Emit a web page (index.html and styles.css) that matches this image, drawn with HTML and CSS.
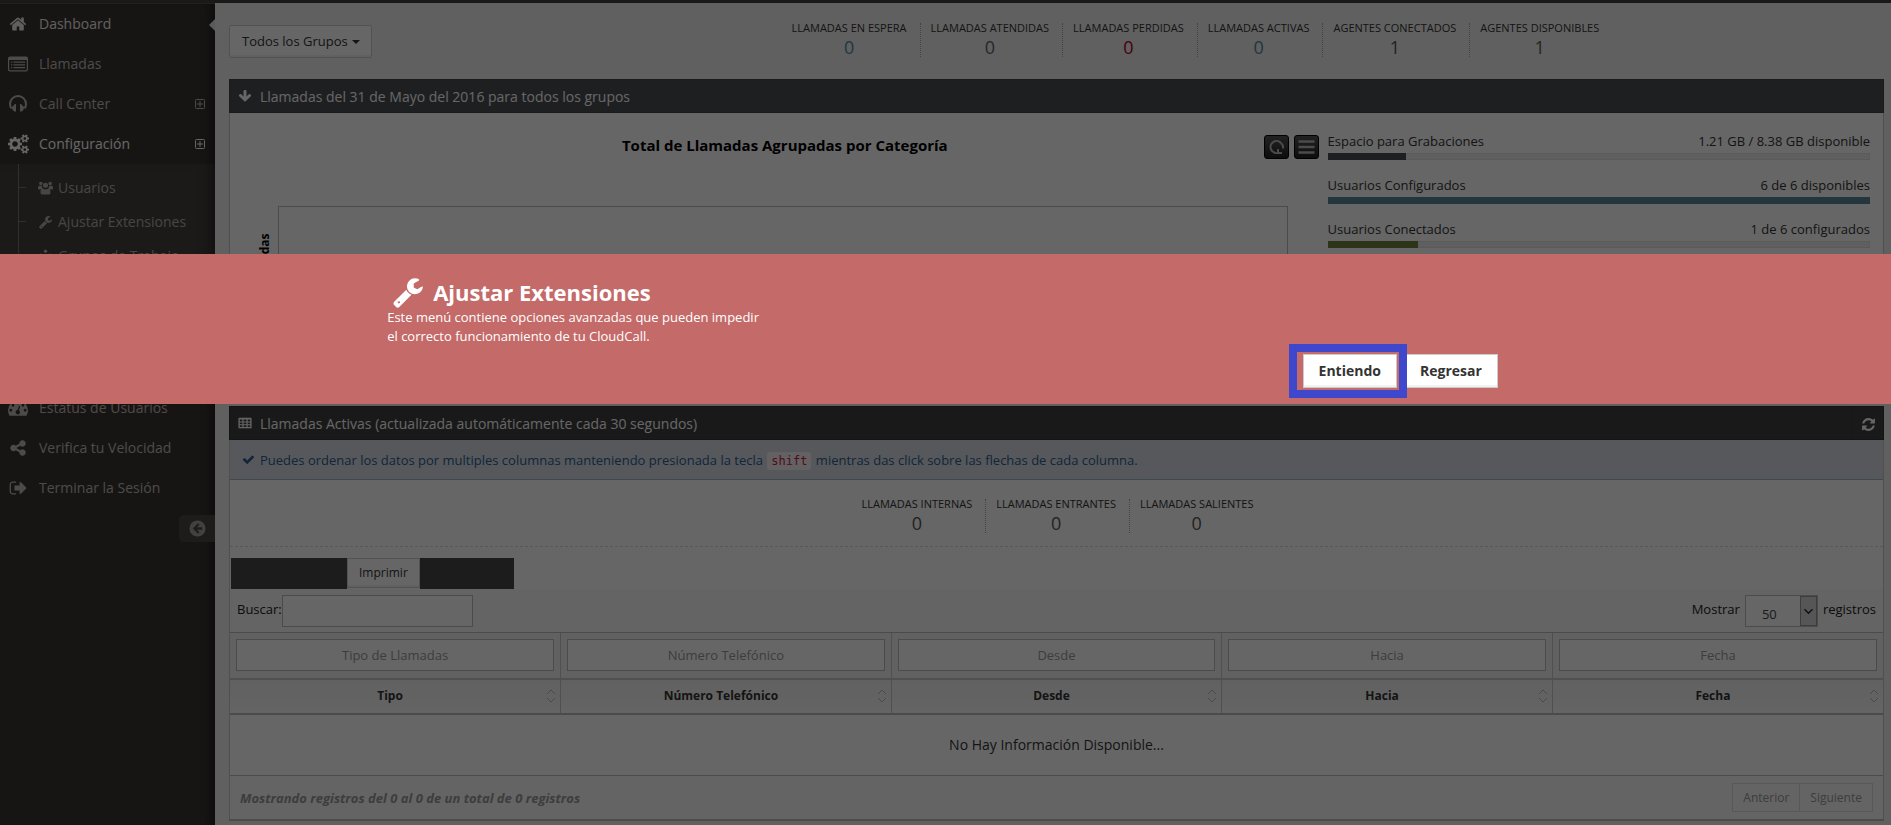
FILE: index.html
```html
<!DOCTYPE html>
<html lang="es">
<head>
<meta charset="utf-8">
<title>CloudCall - Dashboard</title>
<meta name="viewport" content="width=device-width, initial-scale=1">
<link rel="stylesheet" href="styles.css">
</head>
<body>
<svg class="sprite" aria-hidden="true">
  <symbol id="i-wrench" viewBox="0 0 1792 1792"><path d="M448 1472q0-26-19-45t-45-19-45 19-19 45 19 45 45 19 45-19 19-45zm644-420l-682 682q-37 37-90 37-52 0-91-37l-106-108q-38-36-38-90 0-53 38-91l681-681q39 98 114.5 173.5t173.5 114.5zm634-435q0 39-23 106-47 134-164.5 217.5t-258.5 83.5q-185 0-316.5-131.5t-131.5-316.5 131.5-316.5 316.5-131.5q58 0 121.5 16.5t107.5 46.5q16 11 16 28t-16 28l-293 169v224l193 107q5-3 79-48.5t135.5-81 70.5-35.5q15 0 23.5 10t8.5 25z"/></symbol>
  <symbol id="i-plus" viewBox="0 0 10 10"><rect x=".5" y=".5" width="9" height="9" rx="1" fill="none" stroke="currentColor"/><path d="M2 4.500h6v1H2zM4.500 2h1v6h-1z"/></symbol>
  <symbol id="i-sort" viewBox="0 0 10 14"><path d="M1 5l4-4 4 4M1 9l4 4 4-4" fill="none" stroke="currentColor"/></symbol>
</svg>

<div class="topbar"></div>
<div class="page">
  <aside class="sidebar">
    <nav>
      <ul class="nav">
        <li class="active"><a href="#"><svg class="ico" viewBox="0 0 1792 1792"><path d="M1472 992v480q0 26-19 45t-45 19h-384v-384h-256v384h-384q-26 0-45-19t-19-45v-480q0-1 .5-3t.5-3l575-474 575 474q1 2 1 6zm223-69l-62 74q-8 9-21 11h-3q-13 0-21-7l-692-577-692 577q-12 8-24 7-13-2-21-11l-62-74q-8-10-7-23.500t11-21.500l719-599q32-26 76-26t76 26l244 204v-195q0-14 9-23t23-9h192q14 0 23 9t9 23v408l219 182q10 8 11 21.500t-7 23.500z"/></svg><span>Dashboard</span></a></li>
        <li><a href="#"><svg class="ico" viewBox="0 0 20 18"><path d="M2 1.500h16q2 0 2 2v11q0 2-2 2H2q-2 0-2-2v-11q0-2 2-2zM1.200 5v9.300q0 1 1 1h15.600q1 0 1-1V5zM3 6.500h1.300v1.200H3zm2.500 0H17v1.200H5.500zM3 9.200h1.300v1.200H3zm2.500 0H17v1.200H5.500zM3 12h1.300v1.200H3zm2.500 0H17v1.200H5.500z" fill-rule="evenodd"/></svg><span>Llamadas</span></a></li>
        <li><a href="#"><svg class="ico" viewBox="0 0 18 18"><path d="M2.500 13.500Q1 11.500 1 9a8 8 0 0 1 16 0q0 2.500-1.500 4.500" fill="none" stroke="currentColor" stroke-width="2"/><path d="M3 12l3-3 1 0v7.500H5.500Q3 15.500 3 12zM15 12l-3-3-1 0v7.500h1.500Q15 15.500 15 12z"/></svg><span>Call Center</span><svg class="plus"><use href="#i-plus"/></svg></a></li>
        <li class="open"><a href="#"><svg class="ico cogs" viewBox="0 0 1920 1792"><path d="M896 896q0-106-75-181t-181-75-181 75-75 181 75 181 181 75 181-75 75-181zm768 512q0-52-38-90t-90-38-90 38-38 90q0 53 37.500 90.500t90.500 37.500 90.500-37.500 37.500-90.500zm0-1024q0-52-38-90t-90-38-90 38-38 90q0 53 37.500 90.500t90.500 37.500 90.500-37.500 37.500-90.500zm-384 421v185q0 10-7 19.500t-16 10.500l-155 24q-11 35-32 76 34 48 90 115 7 11 7 20 0 12-7 19-23 30-82.500 89.500t-78.500 59.500q-11 0-21-7l-115-90q-37 19-77 31-11 108-23 155-7 24-30 24h-186q-11 0-20-7.500t-10-17.500l-23-153q-34-10-75-31l-118 89q-7 7-20 7-11 0-21-8-144-133-144-160 0-9 7-19 10-14 41-53t47-61q-23-44-35-82l-152-24q-10-1-17-9.500t-7-19.500v-185q0-10 7-19.500t16-10.500l155-24q11-35 32-76-34-48-90-115-7-11-7-20 0-12 7-20 22-30 82-89t79-59q11 0 21 7l115 90q34-18 77-32 11-108 23-154 7-24 30-24h186q11 0 20 7.500t10 17.500l23 153q34 10 75 31l118-89q8-7 20-7 11 0 21 8 144 133 144 160 0 8-7 19-12 16-42 54t-45 60q23 48 34 82l152 23q10 2 17 10.500t7 19.500zm640 533v140q0 16-149 31-12 27-30 52 51 113 51 138 0 4-4 7-122 71-124 71-8 0-46-47t-52-68q-20 2-30 2t-30-2q-14 21-52 68t-46 47q-2 0-124-71-4-3-4-7 0-25 51-138-18-25-30-52-149-15-149-31v-140q0-16 149-31 13-29 30-52-51-113-51-138 0-4 4-7 4-2 35-20t59-34 30-16q8 0 46 46.500t52 67.500q20-2 30-2t30 2q51-71 92-112l6-2q4 0 124 70 4 3 4 7 0 25-51 138 17 23 30 52 149 15 149 31zm0-1024v140q0 16-149 31-12 27-30 52 51 113 51 138 0 4-4 7-122 71-124 71-8 0-46-47t-52-68q-20 2-30 2t-30-2q-14 21-52 68t-46 47q-2 0-124-71-4-3-4-7 0-25 51-138-18-25-30-52-149-15-149-31v-140q0-16 149-31 13-29 30-52-51-113-51-138 0-4 4-7 4-2 35-20t59-34 30-16q8 0 46 46.500t52 67.500q20-2 30-2t30 2q51-71 92-112l6-2q4 0 124 70 4 3 4 7 0 25-51 138 17 23 30 52 149 15 149 31z"/></svg><span>Configuración</span><svg class="plus"><use href="#i-plus"/></svg></a>
          <ul class="subnav">
            <li><a href="#"><svg viewBox="0 0 16 14"><circle cx="3" cy="2.300" r="1.900"/><circle cx="13" cy="2.300" r="1.900"/><circle cx="8" cy="4" r="2.700"/><path d="M0 8V6.500Q0 4.500 1.300 4.500q1.500.8 3 .3-.2 1.700.7 2.700Q3.500 7.500 2.800 8.500H1Q0 8.500 0 8zM16 8V6.500q0-2-1.300-2-1.500.8-3 .3.200 1.700-.7 2.700 1.500 0 2.200 1H15q1 0 1-.5zM2.700 12q0-4.500 2.300-4.500 3 2 6 0 2.300 0 2.300 4.500 0 2-2 2H4.700q-2 0-2-2z"/></svg><span>Usuarios</span></a></li>
            <li><a href="#"><svg><use href="#i-wrench"/></svg><span>Ajustar Extensiones</span></a></li>
            <li><a href="#"><svg viewBox="0 0 16 16"><circle cx="8" cy="2.500" r="2"/><path d="M2 5l4 1h4l4-1v1.500l-3.500 1V15h-2v-4h-1v4h-2V7.500L2 6.500z"/></svg><span>Grupos de Trabajo</span></a></li>
          </ul>
        </li>
        <li><a href="#"><svg class="ico" viewBox="0 0 18 16"><path fill-rule="evenodd" d="M9 1a9 9 0 0 1 9 9q0 2.600-1.400 5H1.400Q0 12.600 0 10a9 9 0 0 1 9-9zM9 2.300a1.300 1.300 0 1 0 0 2.600 1.300 1.300 0 0 0 0-2.600zM4.500 4.200a1.300 1.300 0 1 0 0 2.600 1.300 1.300 0 0 0 0-2.600zM13.500 4.200a1.300 1.300 0 1 0 0 2.600 1.300 1.300 0 0 0 0-2.600zM2.600 8.700a1.300 1.300 0 1 0 0 2.600 1.300 1.300 0 0 0 0-2.600zM15.400 8.700a1.300 1.300 0 1 0 0 2.600 1.300 1.300 0 0 0 0-2.600zM10 6l-1.400 3.800a2 2 0 1 0 1.300.3L11 6.400z"/></svg><span>Estatus de Usuarios</span></a></li>
        <li><a href="#"><svg class="ico" viewBox="0 0 1792 1792"><path d="M1344 1024q133 0 226.500 93.500t93.500 226.500-93.500 226.500-226.500 93.500-226.500-93.500-93.500-226.500q0-12 2-34l-360-180q-92 86-218 86-133 0-226.500-93.500t-93.500-226.500 93.500-226.500 226.500-93.500q126 0 218 86l360-180q-2-22-2-34 0-133 93.500-226.500t226.500-93.500 226.500 93.500 93.500 226.500-93.500 226.500-226.500 93.500q-126 0-218-86l-360 180q2 22 2 34t-2 34l360 180q92-86 218-86z"/></svg><span>Verifica tu Velocidad</span></a></li>
        <li><a href="#"><svg class="ico" viewBox="0 0 1792 1792"><path d="M704 1440q0 4 1 20t.5 26.500-3 23.500-10 19.500-20.500 6.500h-320q-119 0-203.500-84.500t-84.500-203.500v-704q0-119 84.500-203.500t203.500-84.500h320q13 0 22.500 9.500t9.500 22.500q0 4 1 20t.5 26.500-3 23.500-10 19.500-20.500 6.500h-320q-66 0-113 47t-47 113v704q0 66 47 113t113 47h312l11.500 1 11.500 3 8 5.500 7 9 2 13.500zm1024-544q0 26-19 45l-544 544q-19 19-45 19t-45-19-19-45v-288h-448q-26 0-45-19t-19-45v-384q0-26 19-45t45-19h448v-288q0-26 19-45t45-19 45 19l544 544q19 19 19 45z"/></svg><span>Terminar la Sesión</span></a></li>
      </ul>
    </nav>
    <button class="collapse" type="button" aria-label="Contraer menú"><svg viewBox="0 0 18 18"><path fill-rule="evenodd" d="M9 .5a8.500 8.500 0 1 1 0 17 8.500 8.500 0 0 1 0-17zM9.500 3.500L4 9l5.500 5.500 1.600-1.600L8.400 10.200H14V7.800H8.400l2.700-2.700z"/></svg></button>
  </aside>

  <main class="content">
    <header class="summary">
      <button class="btn groups" type="button">Todos los Grupos <i class="caret"></i></button>
      <ul class="stats">
        <li>LLAMADAS EN ESPERA<b class="blue">0</b></li>
        <li>LLAMADAS ATENDIDAS<b class="purple">0</b></li>
        <li>LLAMADAS PERDIDAS<b class="red">0</b></li>
        <li>LLAMADAS ACTIVAS<b class="blue">0</b></li>
        <li>AGENTES CONECTADOS<b>1</b></li>
        <li>AGENTES DISPONIBLES<b class="green">1</b></li>
      </ul>
    </header>

    <section class="widget">
      <div class="widget-head slate">
        <svg viewBox="0 0 1792 1792"><path d="M1675 832q0 53-37 90l-651 652q-39 37-91 37-53 0-90-37l-651-652q-38-36-38-90 0-53 38-91l74-75q39-37 91-37 53 0 90 37l294 294v-704q0-52 38-90t90-38h128q52 0 90 38t38 90v704l294-294q37-37 90-37 52 0 91 37l75 75q37 39 37 91z"/></svg>
        <h2>Llamadas del 31 de Mayo del 2016 para todos los grupos</h2>
      </div>
      <div class="overview">
        <div class="chart">
          <div class="chart-head">
            <h3>Total de Llamadas Agrupadas por Categoría</h3>
            <button class="tool" type="button" aria-label="Recargar"><svg viewBox="0 0 16 16"><path d="M12.500 4A6 6 0 1 0 10 13.700M14.500 9.500A6 6 0 0 0 12.500 4M9.500 10v4h4" fill="none" stroke="currentColor" stroke-width="2"/></svg></button>
            <button class="tool" type="button" aria-label="Menú"><svg viewBox="0 0 16 16"><path d="M0 2.500h16M0 8h16M0 13.500h16" stroke="currentColor" stroke-width="2.500"/></svg></button>
          </div>
          <div class="plot-row"><span class="axis">Llamadas</span><div class="plot"></div></div>
        </div>
        <div class="meters">
          <div class="meter"><span>Espacio para Grabaciones</span><span>1.21 GB / 8.38 GB disponible</span><div class="track"><div class="bar slate" style="width:14.4%"></div></div></div>
          <div class="meter"><span>Usuarios Configurados</span><span>6 de 6 disponibles</span><div class="track"><div class="bar teal" style="width:100%"></div></div></div>
          <div class="meter"><span>Usuarios Conectados</span><span>1 de 6 configurados</span><div class="track"><div class="bar olive" style="width:16.6%"></div></div></div>
        </div>
      </div>
    </section>

    <section class="widget calls">
      <div class="widget-head">
        <svg viewBox="0 0 16 16"><path fill-rule="evenodd" d="M1.500 2h13q1 0 1 1v10q0 1-1 1h-13q-1 0-1-1V3q0-1 1-1zM2 4v2.200h3V4zm4.300 0v2.200h3.400V4zM11 4v2.200h3V4zM2 7.400v2h3v-2zm4.300 0v2h3.400v-2zm4.700 0v2h3v-2zM2 10.600v2h3v-2zm4.300 0v2h3.400v-2zm4.700 0v2h3v-2z"/></svg>
        <h2>Llamadas Activas (actualizada automáticamente cada 30 segundos)</h2>
        <button class="refresh" type="button" aria-label="Actualizar"><svg viewBox="0 0 1792 1792"><path d="M1639 1056q0 5-1 7-64 268-268 434.500t-478 166.500q-146 0-282.500-55t-243.500-157l-129 129q-19 19-45 19t-45-19-19-45v-448q0-26 19-45t45-19h448q26 0 45 19t19 45-19 45l-137 137q71 66 161 102t187 36q134 0 250-65t186-179q11-17 53-117 8-23 30-23h192q13 0 22.500 9.500t9.500 22.500zm25-800v448q0 26-19 45t-45 19h-448q-26 0-45-19t-19-45 19-45l138-138q-148-137-349-137-134 0-250 65t-186 179q-11 17-53 117-8 23-30 23h-199q-13 0-22.500-9.500t-9.500-22.500v-7q65-268 270-434.500t480-166.500q146 0 284 55.500t245 156.500l130-129q19-19 45-19t45 19 19 45z"/></svg></button>
      </div>
      <p class="tip"><svg viewBox="0 0 1792 1792"><path d="M1671 566q0 40-28 68l-724 724-136 136q-28 28-68 28t-68-28l-136-136-362-362q-28-28-28-68t28-68l136-136q28-28 68-28t68 28l294 295 656-657q28-28 68-28t68 28l136 136q28 28 28 68z"/></svg><span>Puedes ordenar los datos por multiples columnas manteniendo presionada la tecla <code>shift</code> mientras das click sobre las flechas de cada columna.</span></p>
      <ul class="stats inner">
        <li>LLAMADAS INTERNAS<b>0</b></li>
        <li>LLAMADAS ENTRANTES<b>0</b></li>
        <li>LLAMADAS SALIENTES<b>0</b></li>
      </ul>
      <div class="exports"><span class="block wide"></span><button class="btn print" type="button">Imprimir</button><span class="block"></span></div>
      <div class="controls">
        <label>Buscar:<input class="search" type="text"></label>
        <div class="length"><label for="len">Mostrar</label><span class="select"><select id="len"><option>50</option></select><svg viewBox="0 0 17 30"><path d="M4 13l4.500 4.500L13 13" fill="none" stroke="currentColor" stroke-width="1.500"/></svg></span><span>registros</span></div>
      </div>
      <table>
        <thead>
          <tr class="filters">
            <th><input type="text" placeholder="Tipo de Llamadas" aria-label="Tipo de Llamadas"></th>
            <th><input type="text" placeholder="Número Telefónico" aria-label="Número Telefónico"></th>
            <th><input type="text" placeholder="Desde" aria-label="Desde"></th>
            <th><input type="text" placeholder="Hacia" aria-label="Hacia"></th>
            <th><input type="text" placeholder="Fecha" aria-label="Fecha"></th>
          </tr>
          <tr class="titles">
            <th><div>Tipo<svg><use href="#i-sort"/></svg></div></th>
            <th><div>Número Telefónico<svg><use href="#i-sort"/></svg></div></th>
            <th><div>Desde<svg><use href="#i-sort"/></svg></div></th>
            <th><div>Hacia<svg><use href="#i-sort"/></svg></div></th>
            <th><div>Fecha<svg><use href="#i-sort"/></svg></div></th>
          </tr>
        </thead>
        <tbody><tr><td colspan="5">No Hay Información Disponible...</td></tr></tbody>
      </table>
      <footer class="table-foot">
        <em>Mostrando registros del 0 al 0 de un total de 0 registros</em>
        <div class="pager"><button type="button">Anterior</button><button type="button">Siguiente</button></div>
      </footer>
    </section>
  </main>
</div>

<div class="backdrop">
  <div class="dialog" role="dialog" aria-labelledby="dlg-title">
    <div class="dialog-body">
      <h1 id="dlg-title"><svg><use href="#i-wrench"/></svg>Ajustar Extensiones</h1>
      <p>Este menú contiene opciones avanzadas que pueden impedir<br>el correcto funcionamiento de tu CloudCall.</p>
      <div class="dialog-actions"><button class="btn" type="button">Regresar</button><button class="btn marked" type="button">Entiendo</button></div>
    </div>
  </div>
</div>
</body>
</html>
```
FILE: styles.css
```css
* { box-sizing: border-box; }
body {
  margin: 0;
  overflow: hidden;
  background: #f0f0f0;
  color: #333;
  font: 13px/20px "Open Sans", Arial, sans-serif;
}
ul { list-style: none; margin: 0; padding: 0; }
h1, h2, h3, p { margin: 0; }
button, input, select { font: inherit; color: inherit; margin: 0; }
svg { fill: currentColor; flex: none; }
a { color: inherit; text-decoration: none; }
.sprite { position: absolute; width: 0; height: 0; }

.topbar { height: 3px; background: #43403d; }
.page { display: flex; min-height: calc(100vh - 3px); }

/* Sidebar */
.sidebar {
  width: 215px;
  flex: none;
  background: #3a3633;
  box-shadow: inset -12px 0 12px -8px #201e1c;
  border-top: 1px solid #55504c;
  color: #c0bbb7;
  font-size: 14px;
}
.nav > li > a { display: flex; align-items: center; height: 40px; padding: 0 10px 0 8px; }
.nav > li > a span { flex: 1; }
.nav .ico { width: 20px; height: 18px; margin-right: 11px; }
.nav .cogs { width: 21px; height: 20px; margin-right: 10px; }
.nav .plus { width: 10px; height: 10px; }
.nav .active { position: relative; color: #eee; }
.nav .active::after {
  content: "";
  position: absolute;
  right: 0;
  top: 15px;
  border: 6px solid transparent;
  border-left: 0;
  border-right-color: #e0e0e6;
}
.nav .open > a { color: #fff; }
.subnav { position: relative; height: 224px; padding-top: 7px; background: #45413e; box-shadow: inset -12px 0 12px -8px #2a2725; color: #b4afab; }
.subnav::before { content: ""; position: absolute; left: 18px; top: 0; bottom: 0; width: 1px; background: #7a7672; }
.subnav a { position: relative; display: flex; align-items: center; gap: 5px; height: 34px; padding-left: 38px; }
.subnav a::before { content: ""; position: absolute; left: 19px; top: 16px; width: 7px; height: 1px; background: #7a7672; }
.subnav svg { width: 15px; height: 14px; }
.collapse {
  display: flex;
  align-items: center;
  justify-content: center;
  width: 36px;
  height: 27px;
  margin: 7px 0 0 auto;
  border: 0;
  border-radius: 5px 0 0 5px;
  background: #4a4744;
  color: #a8a4a0;
}
.collapse svg { width: 17px; height: 17px; }

/* Main column */
.content { flex: 1; min-width: 0; padding: 0 7px 5px 14px; }
.summary { display: grid; grid-template-columns: 1fr 5fr; align-items: start; padding-top: 20px; height: 76px; }
.btn { border: 1px solid #ccc; border-radius: 2px; background: #fff; box-shadow: inset 0 -2px 0 rgba(0, 0, 0, .05); padding: 0 12px; }
.groups { justify-self: start; margin-top: 2px; height: 33px; padding: 0 11px 2px 12px; }
.caret { display: inline-block; margin-left: 1px; border: 4px solid transparent; border-top-color: currentColor; border-bottom: 0; vertical-align: middle; }
.stats { display: flex; justify-content: center; font-size: 11px; line-height: 10px; text-align: center; }
.stats li { padding: 0 13px 0 10px; height: 34px; }
.stats li:last-child { padding-right: 8px; }
.stats li + li { border-left: 1px dotted #aaa; }
.stats b { display: block; font-size: 18px; line-height: 28px; font-weight: 400; color: #555; }
.stats .blue { color: #57889c; }
.stats .purple { color: #6e587a; }
.stats .red { color: #a90329; }
.stats .green { color: #496949; }

.widget { border: 1px solid #c8c8c8; border-top: 0; background: #fff; margin-bottom: 15px; }
.widget-head { display: flex; align-items: center; height: 34px; margin: 0 -1px; padding-left: 8px; background: #404040; border: 1px solid #333; color: #fff; }
.widget-head.slate { background: #4c4f53; border-color: #444; }
.widget-head > svg { width: 14px; height: 14px; margin-right: 8px; }
.widget-head h2 { flex: 1; padding-top: 2px; font-size: 14px; font-weight: 400; }
.refresh { width: 31px; height: 32px; border: 0; border-left: 1px solid #383838; background: none; padding: 0; }
.refresh svg { width: 15px; height: 15px; vertical-align: middle; }

.overview { display: grid; grid-template-columns: minmax(0, 1fr) 33.6%; height: 277px; }
.chart { display: flex; flex-direction: column; padding: 22px 9px 0 11px; }
.chart-head { display: flex; gap: 5px; height: 24px; }
.chart-head h3 { flex: 1; padding-left: 70px; font: 700 15px/20px "Trebuchet MS", "Open Sans", sans-serif; text-align: center; color: #000; }
.tool { width: 25px; height: 24px; padding: 3px; border: 1px solid #000; border-radius: 3px; background: linear-gradient(#555, #222); color: #bbb; }
.tool svg { display: block; width: 17px; height: 16px; }
.plot-row { display: flex; flex: 1; padding: 47px 31px 20px 0; }
.axis { width: 37px; writing-mode: vertical-rl; transform: rotate(180deg); padding: 0 17px 27px 0; font-size: 12px; line-height: 14px; font-weight: 700; color: #000; text-align: right; }
.plot { flex: 1; border: 1px solid #bbb; }
.meters { padding: 17px 13px 0 0; }
.meter { display: flex; flex-wrap: wrap; justify-content: space-between; margin-bottom: 14px; line-height: 22px; }
.track { width: 100%; height: 7px; margin-top: 1px; background: #eee; box-shadow: inset 0 0 0 1px #e0e0e0; }
.bar { height: 7px; }
.bar.slate { background: #4c4f53; }
.bar.teal { background: #57889c; }
.bar.olive { background: #71843f; }

.calls { margin-bottom: 0; border-bottom: 2px solid #bbb; }
.tip { display: flex; align-items: center; height: 40px; padding: 0 12px; border-bottom: 1px solid #9cb4c5; background: #d6dde7; color: #305d8c; }
.tip svg { width: 13px; height: 13px; margin-right: 5px; }
code { margin: 0 1px; padding: 2px 4px; border-radius: 3px; background: #f9f2f4; color: #c7254e; font: 12px/14px "DejaVu Sans Mono", monospace; }
.inner { padding-top: 19px; height: 67px; border-bottom: 1px dashed #ddd; }
.exports { display: flex; align-items: flex-start; padding: 11px 1px 0; height: 42px; }
.block { width: 94px; height: 31px; background: #464646; }
.block.wide { width: 116px; }
.print { height: 30px; padding: 0 11px; border-radius: 0; font-size: 12px; }
.controls { display: flex; justify-content: space-between; height: 43px; padding: 6px 7px 0; background: #f9f9f9; color: #222; line-height: 28px; }
.controls label { display: flex; align-items: flex-start; }
.search { width: 191px; height: 32px; border: 1px solid #bbb; background: #fff; }
.length { display: flex; gap: 5px; }
.select { position: relative; display: flex; width: 73px; height: 32px; }
.select select { appearance: none; width: 100%; border: 1px solid #bbb; border-radius: 0; background: #fff; padding: 4px 16px 0 16px; color: #444; }
.select svg { position: absolute; right: 1px; top: 1px; width: 17px; height: 30px; border: 1px solid #999; background: #d8d8d8; pointer-events: none; }

table { width: 100%; table-layout: fixed; border-collapse: collapse; }
th { border: 1px solid #c8c8c8; border-width: 1px 0 0 1px; background: #f3f3f3; }
th:first-child { border-left: 0; }
.filters th { padding: 6px; height: 46px; border-top-color: #bbb; }
.filters input { display: block; width: 100%; height: 32px; border: 1px solid #bbb; background: #fff; text-align: center; font-weight: 400; }
.filters input::placeholder { color: #999; opacity: 1; }
.titles th { height: 35px; padding: 0 4px; border-width: 2px 0 2px 1px; border-bottom-color: #bbb; font-size: 12px; background: linear-gradient(#f2f2f2, #fafafa); }
.titles th div { display: grid; grid-template-columns: 1fr 10px; align-items: center; }
.titles svg { width: 10px; height: 14px; color: #bbb; }
td { height: 62px; border-bottom: 1px solid #bbb; text-align: center; font-size: 14px; }
.table-foot { display: flex; justify-content: space-between; align-items: center; height: 43px; padding: 0 10px; background: #fafafa; }
.table-foot em { font-weight: 700; color: #999; }
.pager { display: flex; }
.pager button { height: 29px; padding: 0 10px; border: 1px solid #ddd; background: #fafafa; font-size: 12px; color: #999; }
.pager button + button { border-left: 0; }

/* Modal */
.backdrop { position: fixed; inset: 0; padding-top: 254px; background: rgba(0, 0, 0, .6); }
.dialog { height: 150px; padding: 0 20%; background: #c46a69; color: #fff; }
.dialog-body { display: flex; flex-direction: column; height: 100%; padding: 22px 15px 16px 9px; }
.dialog h1 { display: flex; align-items: center; height: 32px; font-size: 22px; line-height: 32px; }
.dialog h1 svg { width: 32px; height: 32px; margin: 0 9px 0 5px; }
.dialog p { line-height: 19px; }
.dialog-actions { display: flex; flex-direction: row-reverse; gap: 7px; margin-top: auto; }
.dialog-actions .btn { height: 34px; padding: 0 15px; border-radius: 0; font-size: 14px; font-weight: 700; color: #333; }
.marked { position: relative; }
.marked::after { content: ""; position: absolute; inset: -11px -11px -11px -15px; border: 8px solid #3f48cc; }
```
